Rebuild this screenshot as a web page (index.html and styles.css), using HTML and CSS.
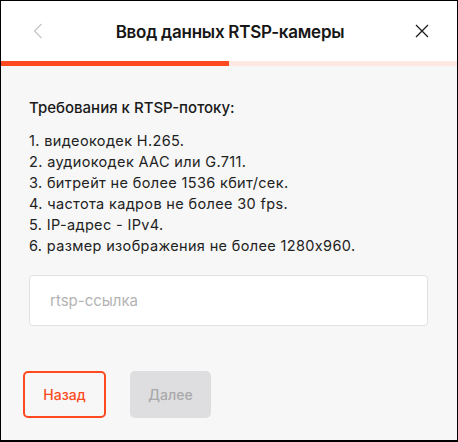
FILE: index.html
```html
<!DOCTYPE html>
<html lang="ru">
<head>
  <meta charset="UTF-8">
  <title>Ввод данных RTSP-камеры</title>
  <link rel="stylesheet" href="styles.css">
</head>
<body>

  <div class="window">
    <header class="top">
      <button class="icon-btn back" aria-label="Назад">
        <svg width="10" height="16" viewBox="0 0 10 16"><path d="M8.5 1 L1.5 8 L8.5 15" fill="none" stroke="#c4c4c4" stroke-width="1.2"/></svg>
      </button>
      <h1>Ввод данных RTSP-камеры</h1>
      <button class="icon-btn close" aria-label="Закрыть">
        <svg width="14" height="14" viewBox="0 0 14 14"><path d="M1 1 L13 13 M13 1 L1 13" fill="none" stroke="#1c1c1c" stroke-width="1.3"/></svg>
      </button>
    </header>

    <div class="progress"><div class="progress-fill"></div></div>

    <main class="content">
      <h2>Требования к RTSP-потоку:</h2>
      <ol class="reqs">
        <li>1. видеокодек H.265.</li>
        <li>2. аудиокодек AAC или G.711.</li>
        <li>3. битрейт не более 1536 кбит/сек.</li>
        <li>4. частота кадров не более 30 fps.</li>
        <li>5. IP-адрес - IPv4.</li>
        <li>6. размер изображения не более 1280x960.</li>
      </ol>

      <input type="text" class="link-input" placeholder="rtsp-ссылка">

      <div class="actions">
        <button class="btn btn-outline">Назад</button>
        <button class="btn btn-disabled" disabled>Далее</button>
      </div>
    </main>
  </div>

</body>
</html>
```

FILE: styles.css
```css
* {
  margin: 0;
  padding: 0;
  box-sizing: border-box;
}

body, html {
  height: 100%;
  font-family: Inter, 'Noto Sans', sans-serif;
  background: #000;
  overflow: hidden;
}

.window {
  height: 442px;
  border: 1px solid #000;
  border-bottom-width: 2px;
  background: #f7f7f7;
}

.top {
  height: 60px;
  background: #fff;
  display: flex;
  align-items: center;
  justify-content: space-between;
  padding: 0 27px 0 29px;
}

.top h1 {
  font-size: 17px;
  font-weight: 600;
  color: #161616;
  letter-spacing: -0.25px;
  margin-top: 1px;
}

.icon-btn {
  background: none;
  border: none;
  display: flex;
  align-items: center;
  justify-content: center;
  width: 16px;
  height: 20px;
  cursor: pointer;
}

.progress {
  height: 5px;
  background: #fde8e2;
}

.progress-fill {
  width: 228px;
  height: 100%;
  background: #ff4a21;
}

.content {
  padding: 32px 28px 0 22px;
}

.content h2 {
  font-size: 15px;
  line-height: 20px;
  font-weight: 500;
  color: #1a1a1a;
  margin-left: 6px;
}

.reqs {
  list-style: none;
  margin: 12px 0 0 6px;
  font-size: 14.5px;
  line-height: 21px;
  letter-spacing: 0.35px;
  color: #222;
}

.link-input {
  display: block;
  width: 399px;
  height: 51px;
  margin: 19px 0 0 6px;
  border: 1px solid #e2e2e2;
  border-radius: 4px;
  background: #fff;
  padding: 0 20px;
  font-family: inherit;
  font-size: 15px;
  color: #222;
  outline: none;
}

.link-input::placeholder {
  color: #b3b3b3;
}

.actions {
  display: flex;
  gap: 24px;
  margin-top: 45px;
}

.btn {
  width: 83px;
  height: 47px;
  border-radius: 5px;
  font-family: inherit;
  font-size: 14px;
  font-weight: 500;
  cursor: pointer;
}

.btn-outline {
  background: transparent;
  border: 2px solid #ff4a21;
  color: #ff4a21;
}

.btn-disabled {
  width: 81px;
  background: #dedee0;
  border: none;
  color: #a9a9ab;
  cursor: default;
}
```
